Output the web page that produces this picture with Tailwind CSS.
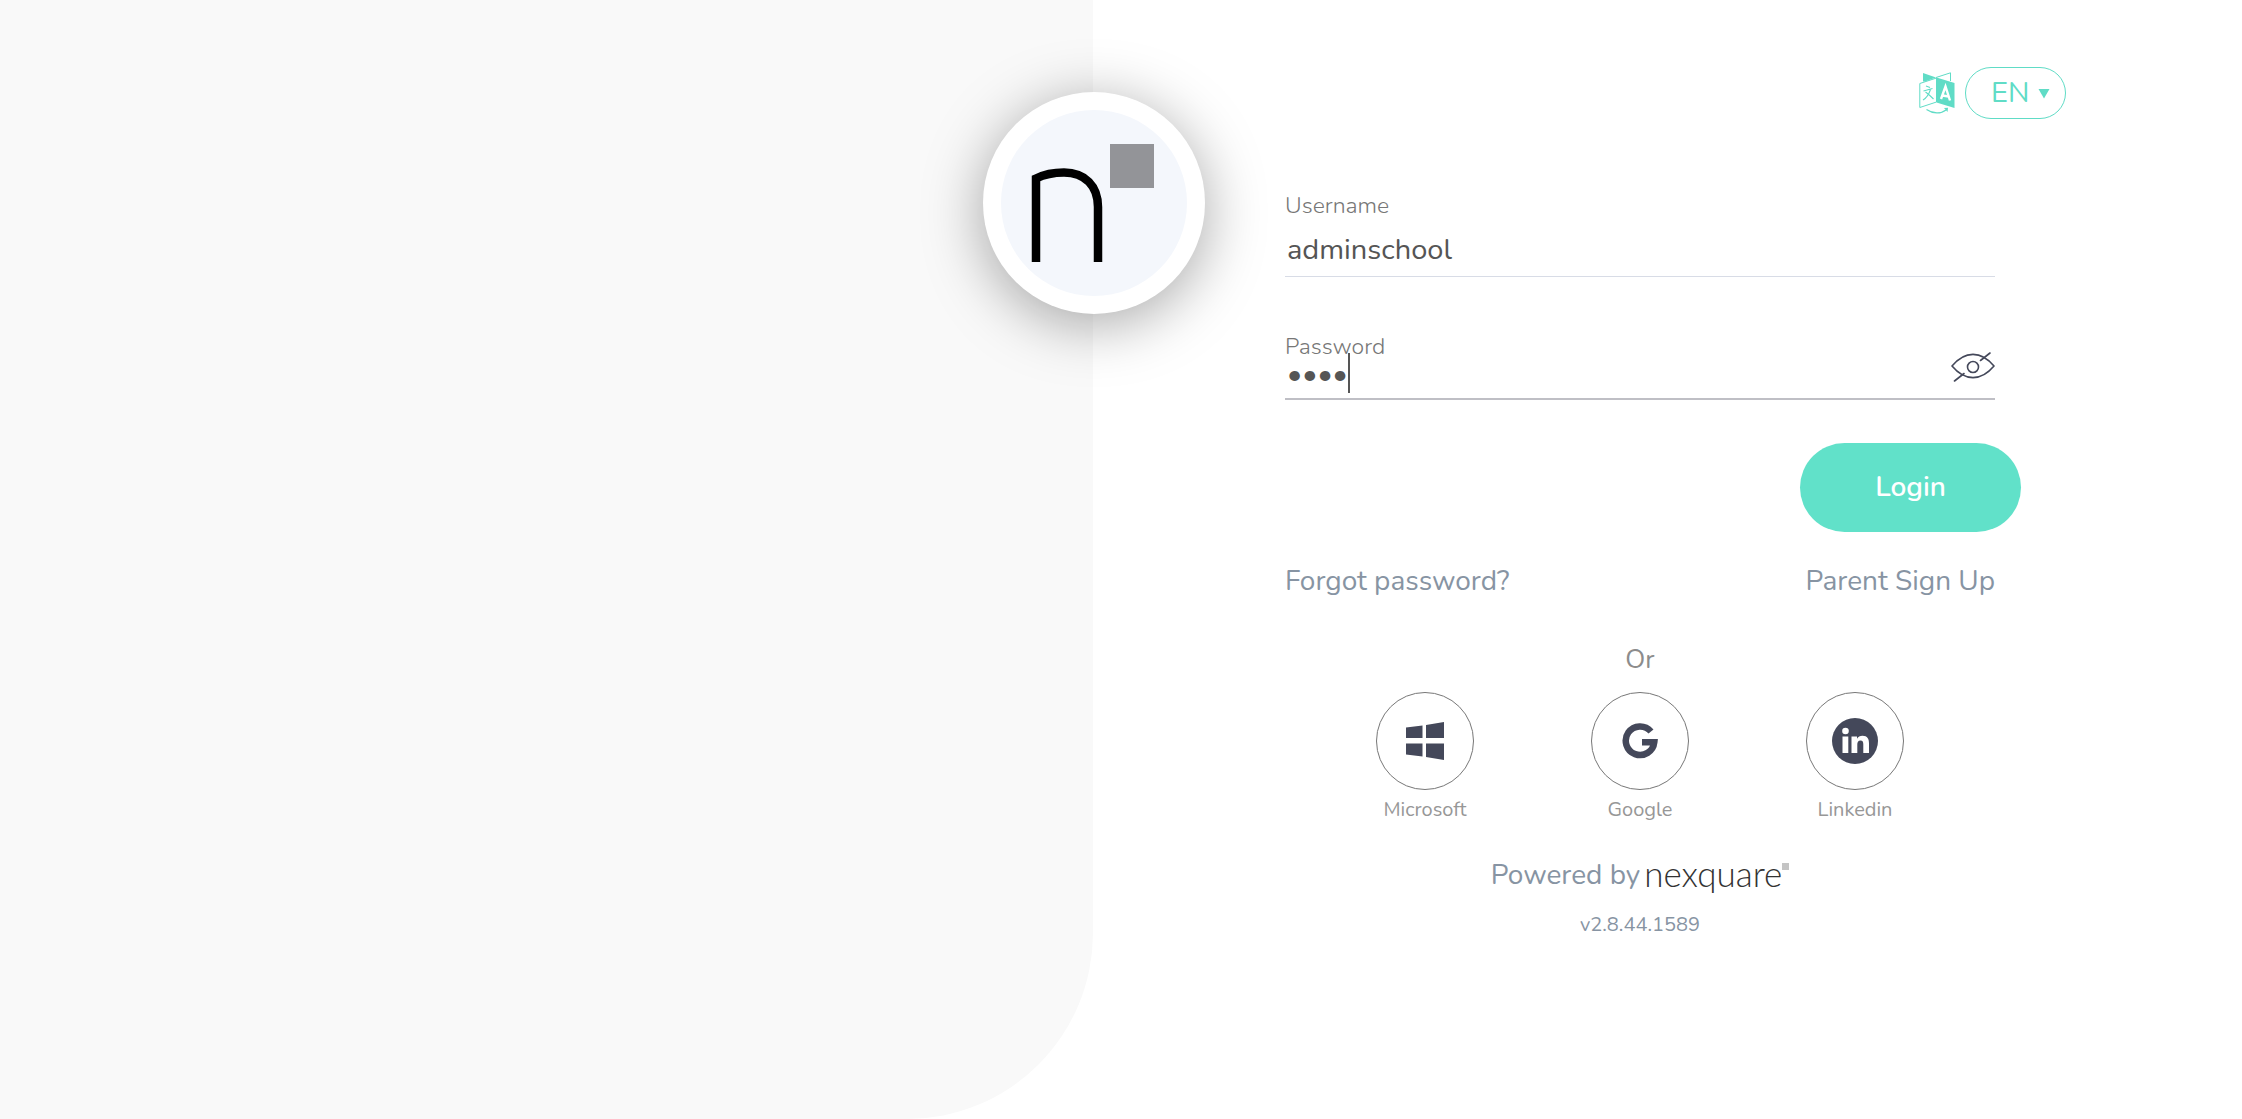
<!DOCTYPE html>
<html lang="en">
<head>
<meta charset="utf-8">
<meta name="viewport" content="width=device-width, initial-scale=1">
<title>Login</title>
<script src="https://cdn.jsdelivr.net/npm/@tailwindcss/browser@4"></script>
</head>
<body class="flex min-h-screen overflow-x-hidden bg-white font-['Nunito','Lato',sans-serif] text-[28px] leading-10 text-[#8794a3]">
  <aside class="relative w-[1093px] max-w-[49%] shrink-0 rounded-br-[186px] bg-[#f9f9f9]">
    <!-- School badge straddling the panel edge -->
    <div class="absolute top-[92px] -right-[112px] size-[222px] rounded-full bg-white p-[18px] shadow-[0_10px_60px_rgba(0,0,0,0.35)]">
      <svg viewBox="0 0 186 186" class="size-full rounded-full bg-[#f4f7fc]" role="img" aria-label="School logo">
        <path d="M35 152V68.500C43 64.500 53 62.500 63 62.500C84 62.500 97 76 97 97V152" fill="none" stroke="#000" stroke-width="8.500"/>
        <rect x="109" y="34" width="44" height="44" fill="#939498"/>
      </svg>
    </div>
  </aside>

  <main class="min-w-0 flex-1 pt-[67px] pr-[176px] pb-12 pl-48">
    <header class="flex items-center justify-end gap-2.5">
      <svg viewBox="0 0 36 42" class="h-[42px] w-9" fill="none" stroke="#60dcc6" aria-hidden="true">
        <path d="M4 1L17 5.500L6 9.500H4Z" fill="#60dcc6" stroke="none"/>
        <path d="M17 5.500L31.500 .800V9" stroke-width="1"/>
        <path d="M.800 11.500L17.500 6V30L.800 35.500Z" stroke-width="1"/>
        <path d="M17.500 5.500L35.500 11V36L17.500 30.500Z" fill="#60dcc6" stroke="none"/>
        <path d="M22 27L26.500 14.500L31 28.500M23.500 23.500L29.500 24.500" stroke="#fff" stroke-width="2.400"/>
        <path d="M7 14L11 15.500M4.500 19L13.500 16.500M11.500 17.500C10 22 7.500 26 4 28M6.500 20C9.500 22 12 24.500 14.500 27" stroke-width="1.100"/>
        <path d="M7.500 37.500C14 42 22 42 27 38" stroke-width="1.200"/>
        <path d="M25 36L29 35.800L28.500 40Z" fill="#60dcc6" stroke="none"/>
      </svg>
      <div class="relative">
        <select aria-label="Language" class="h-[52px] w-[101px] appearance-none rounded-full border border-[#60dcc6] bg-white pl-[25px] text-[29px] leading-10 text-[#60dcc6]">
          <option>EN</option>
        </select>
        <svg viewBox="0 0 12 10" class="pointer-events-none absolute top-[22px] right-4 h-2.5 w-3" aria-hidden="true"><path d="M.500 0H11.500L6 9.500Z" fill="#60dcc6"/></svg>
      </div>
    </header>

    <div class="mr-[71px] mt-[73px]">
      <form>
        <label for="username" class="block text-[23px] leading-7 font-light text-[#777]">Username</label>
        <input id="username" type="text" value="adminschool" class="block h-[57px] w-full border-b border-[#d8dce6] px-0.5 pt-0.5 text-[29px] text-[#555] outline-none">

        <div class="relative mt-14">
          <label for="password" class="block text-[23px] leading-7 font-light text-[#777]">Password</label>
          <input id="password" type="password" value="1234" class="block h-[39px] w-full border-b-2 border-[#bfbfc5] px-0.5 pb-3 text-[29px] text-[#555] outline-none">
          <span class="absolute top-5 left-[63px] h-10 w-0.5 bg-[#555]"></span>
          <button type="button" aria-label="Show password" class="absolute top-[19px] right-0">
            <svg viewBox="0 0 44 30" class="h-[30px] w-11" fill="none" stroke="#44485a" stroke-width="1.600" stroke-linecap="round" stroke-linejoin="round">
              <path d="M1 14C14-1.500 30-1.500 43 14C30 29.500 14 29.500 1 14Z"/>
              <circle cx="22" cy="15" r="5.500"/>
              <path d="M29.500 8.500L39 1M3.500 29L13 21.500"/>
            </svg>
          </button>
        </div>

        <div class="-mr-[26px] mt-[43px] flex justify-end">
          <button type="submit" class="h-[89px] w-[221px] rounded-full bg-[#61e1c9] pb-0.5 font-semibold text-white">Login</button>
        </div>
      </form>

      <nav class="mt-[29px] flex justify-between">
        <a href="#">Forgot password?</a>
        <a href="#">Parent Sign Up</a>
      </nav>

      <p class="mt-[41px] text-center text-[26px] leading-9 text-[#8c8c8c]">Or</p>

      <div class="mt-3.5 flex justify-center gap-[117px] text-xl leading-7 text-[#979797]">
        <a href="#" class="flex w-[98px] flex-col items-center gap-1.5">
          <span class="flex size-[98px] items-center justify-center rounded-full border border-[#777]">
            <svg viewBox="0 0 38 38" class="size-[38px]" fill="#44485a" aria-hidden="true"><path d="M0 5.500L16.500 3.500V16H0ZM20 3L38 0V16H20ZM0 21.500H16.500V34.500L0 32.500ZM20 21.500H38V38L20 35Z"/></svg>
          </span>
          Microsoft
        </a>
        <a href="#" class="flex w-[98px] flex-col items-center gap-1.5">
          <span class="flex size-[98px] items-center justify-center rounded-full border border-[#777]">
            <svg viewBox="0 0 36 36" class="size-9" fill="none" stroke="#44485a" stroke-width="6.500" aria-hidden="true"><path d="M29 8.500A14.300 14.300 0 1 0 32.300 19.200H20"/></svg>
          </span>
          Google
        </a>
        <a href="#" class="flex w-[98px] flex-col items-center gap-1.5">
          <span class="flex size-[98px] items-center justify-center rounded-full border border-[#777]">
            <svg viewBox="0 0 46 46" class="size-[46px]" aria-hidden="true">
              <circle cx="23" cy="23" r="23" fill="#44485a"/>
              <circle cx="13.500" cy="13" r="3.300" fill="#fff"/>
              <path d="M10.500 18.500H16.300V35H10.500ZM19.500 18.500H25V20.800C26 19 28 17.800 30.500 17.800C35.500 17.800 37 21 37 25.500V35H31.300V26.500C31.300 24 30.800 22.500 28.500 22.500C26 22.500 25.300 24.300 25.300 26.500V35H19.500Z" fill="#fff"/>
            </svg>
          </span>
          Linkedin
        </a>
      </div>

      <p class="mt-[31px] flex h-10 items-center justify-center gap-1">
        Powered by
        <a href="#" class="flex pb-1 text-[#333]">
          <span class="font-['Lato',sans-serif] text-[35px] font-light">nexquare</span>
          <span class="mt-2.5 size-[7px] bg-[#c4c4c4]"></span>
        </a>
      </p>
      <p class="mt-4 text-center text-xl leading-7">v2.8.44.1589</p>
    </div>
  </main>
</body>
</html>
